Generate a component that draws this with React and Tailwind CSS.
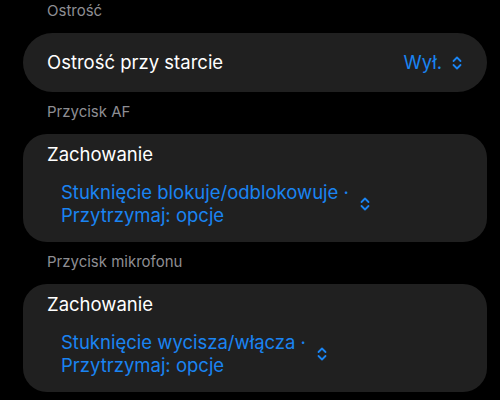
const FONT = { fontFamily: 'Inter, "Noto Sans", sans-serif' };

function Chevrons({ className = '' }) {
  return (
    <svg viewBox="0 0 10 14" className={`w-[10px] h-[14px] shrink-0 ${className}`} fill="none" stroke="#1a84f2" strokeWidth="1.8" strokeLinecap="round" strokeLinejoin="round">
      <path d="M1.5 5 L5 1.5 L8.5 5" />
      <path d="M1.5 9 L5 12.5 L8.5 9" />
    </svg>
  );
}

function Label({ children, first }) {
  return (
    <div className={`pl-[24px] text-[15px] leading-[20px] text-[#8e8e93] ${first ? 'mt-px' : 'mt-[10px]'} mb-[12px]`}>{children}</div>
  );
}

function BehaviorCard({ lines }) {
  return (
    <div className="bg-[#202020] rounded-[24px] pl-[24px] pt-[8px] pb-[15px]">
      <div className="text-[18.5px] leading-[24px] text-white">Zachowanie</div>
      <div className="flex items-center gap-[11px] pl-[14px] mt-[15px]">
        <div className="text-[18.5px] leading-[23px] text-[#1a84f2]">
          {lines.map(l => <div key={l}>{l}</div>)}
        </div>
        <Chevrons />
      </div>
    </div>
  );
}

export default function App() {
  return (
    <div className="w-[500px] h-[400px] bg-black overflow-hidden" style={FONT}>
      <div className="pl-[23px] pr-[13px]">
        <Label first>Ostrość</Label>
        <div className="h-[59px] bg-[#202020] rounded-full flex items-center pl-[24px] pr-[25px]">
          <span className="flex-1 text-[18.5px] text-white">Ostrość przy starcie</span>
          <span className="text-[18.5px] text-[#1a84f2] mr-[10px]">Wył.</span>
          <Chevrons />
        </div>

        <Label>Przycisk AF</Label>
        <BehaviorCard lines={['Stuknięcie blokuje/odblokowuje ·', 'Przytrzymaj: opcje']} />

        <Label>Przycisk mikrofonu</Label>
        <BehaviorCard lines={['Stuknięcie wycisza/włącza ·', 'Przytrzymaj: opcje']} />
      </div>
    </div>
  );
}
